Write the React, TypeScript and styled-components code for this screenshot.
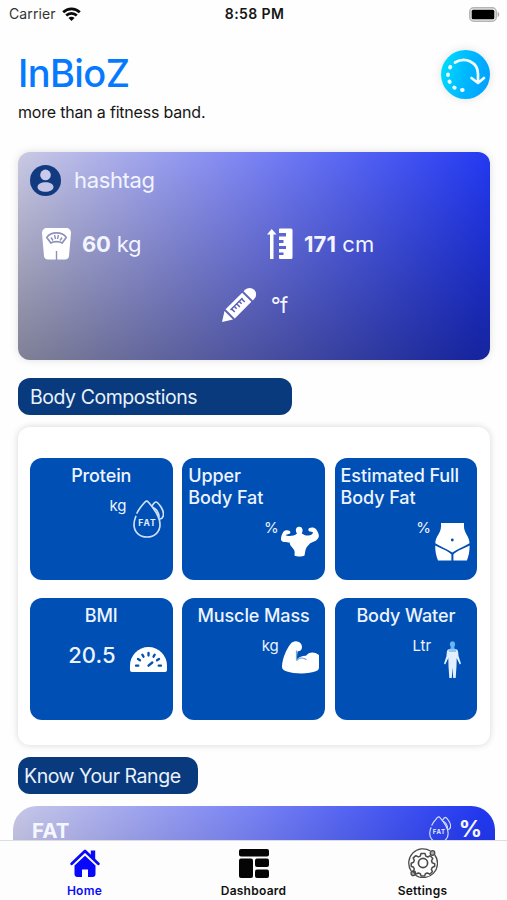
import React from 'react';
import styled, { createGlobalStyle } from 'styled-components';

const Global = createGlobalStyle`
  *, *::before, *::after { box-sizing: border-box; }
  html, body { margin: 0; padding: 0; background: #fefefe; overflow: hidden; }
  body { font-family: Inter, "Liberation Sans", sans-serif; color: #161616; }
  svg { display: block; flex: none; }
`;

const Screen = styled.div`
  width: 507px;
  height: 900px;
  display: flex;
  flex-direction: column;
  overflow: hidden;
`;

const StatusBar = styled.header`
  height: 28px;
  flex: none;
  display: grid;
  grid-template-columns: 1fr auto 1fr;
  align-items: center;
  padding: 0 7px 0 9px;
  font-size: 14px;
  line-height: 28px;
`;
const Carrier = styled.div`
  display: flex;
  align-items: center;
  gap: 6px;
  color: #333;
  letter-spacing: 0.1px;
`;
const Clock = styled.div`
  font-weight: 600;
  letter-spacing: 0.4px;
`;
const BatterySlot = styled.div`
  display: flex;
  justify-content: flex-end;
`;

const Content = styled.main`
  flex: 1;
  min-height: 0;
  overflow: hidden;
  display: flex;
  flex-direction: column;
`;
const Masthead = styled.div`
  height: 124px;
  flex: none;
  display: flex;
  justify-content: space-between;
  padding: 22px 17px 0 18px;
`;
const Brand = styled.h1`
  margin: 0;
  font-size: 38px;
  line-height: 46px;
  font-weight: 450;
  color: #067aff;
  letter-spacing: -0.6px;
`;
const Tagline = styled.p`
  margin: 6px 0 0;
  font-size: 16px;
  line-height: 20px;
  letter-spacing: -0.2px;
`;
const SyncButton = styled.button`
  width: 49px;
  height: 49px;
  margin: 0;
  padding: 0;
  border: 0;
  border-radius: 50%;
  background: linear-gradient(105deg, #00e2f8, #00b8ff 50%, #009cff);
  box-shadow: 0 0 10px rgba(0, 0, 0, 0.12);
`;

const ProfileCard = styled.section`
  height: 208px;
  flex: none;
  margin: 0 17px 18px 18px;
  border-radius: 12px;
  background:
    linear-gradient(to bottom, rgba(0, 0, 0, 0), rgba(0, 0, 0, 0.35)),
    linear-gradient(95deg, #cacae4 0%, #7c84f4 47%, #2238f2 97%);
  box-shadow: 0 0 8px rgba(0, 0, 0, 0.13);
  color: #f2f4ff;
  padding: 12px 12px 0;
`;
const UserRow = styled.div`
  display: flex;
  align-items: center;
  gap: 13px;
  height: 32px;
  font-size: 22px;
`;
const UserName = styled.span`
  letter-spacing: -0.35px;
`;
const Measures = styled.div`
  display: grid;
  grid-template-columns: 225px 1fr;
  padding-left: 12px;
  margin-top: 32px;
`;
const Measure = styled.div<{ $gap: number; $tracking?: number }>`
  display: flex;
  align-items: center;
  gap: ${(p) => p.$gap}px;
  height: 32px;
  font-size: 22px;
  letter-spacing: ${(p) => p.$tracking ?? 0}px;
  white-space: pre;
  b { font-weight: 650; }
`;
const TemperatureRow = styled.div`
  display: flex;
  justify-content: center;
  margin-top: 29px;
`;

const Pill = styled.h2<{ $width: number; $indent: number }>`
  width: ${(p) => p.$width}px;
  height: 37px;
  flex: none;
  margin: 0 0 0 18px;
  padding-left: ${(p) => p.$indent}px;
  border-radius: 12px;
  background: #083a7d;
  color: #eaf1fb;
  font-size: 19.5px;
  line-height: 38px;
  font-weight: 400;
  letter-spacing: -0.46px;
`;
const Panel = styled.section`
  height: 318px;
  flex: none;
  margin: 12px 17px 12px 18px;
  padding: 31px 12px 0;
  border-radius: 12px;
  background: #fff;
  box-shadow: 0 0 7px rgba(0, 0, 0, 0.16);
  display: grid;
  grid-template-columns: repeat(3, 142.500px);
  grid-auto-rows: 122px;
  column-gap: 9.8px;
  row-gap: 18px;
`;
const Tile = styled.article`
  border-radius: 12px;
  background: #004fb4;
  color: #edf4ff;
  padding: 7px 6px 0;
  overflow: hidden;
`;
const TileTitle = styled.h3<{ $left?: boolean }>`
  margin: 0;
  font-size: 18px;
  line-height: 21.5px;
  font-weight: 500;
  letter-spacing: -0.1px;
  text-align: ${(p) => (p.$left ? 'left' : 'center')};
  white-space: pre-line;
`;
const Reading = styled.div<{ $gap: number; $top: number; $right: number }>`
  display: flex;
  justify-content: flex-end;
  align-items: flex-start;
  gap: ${(p) => p.$gap}px;
  margin-top: ${(p) => p.$top}px;
  margin-right: ${(p) => p.$right}px;
`;
const Unit = styled.span`
  font-size: 15px;
  line-height: 18px;
`;
const Value = styled.span`
  font-size: 22px;
  line-height: 26px;
  font-weight: 550;
`;
const IconDrop = styled.div<{ $y: number }>`
  padding-top: ${(p) => p.$y}px;
`;

const RangeCard = styled.section`
  height: 60px;
  flex: none;
  margin: 12px 12px 0 13px;
  padding: 10px 13px 0 19px;
  border-radius: 24px 24px 0 0;
  background:
    linear-gradient(to bottom, rgba(0, 0, 0, 0), rgba(0, 0, 0, 0.1)),
    linear-gradient(97deg, #c8c8e8 0%, #7a84f4 48%, #2238f0 96%);
  color: #f5f6ff;
  display: flex;
  justify-content: space-between;
  align-items: flex-start;
  font-size: 20.500px;
  line-height: 29px;
  font-weight: 700;
`;
const RangeUnit = styled.div`
  display: flex;
  align-items: flex-start;
  gap: 8px;
  line-height: 27px;
  font-size: 23px;
  font-weight: 650;
`;

const TabBar = styled.nav`
  height: 60px;
  flex: none;
  border-top: 1px solid #dcdce2;
  background: #fdfdfd;
  display: grid;
  grid-template-columns: repeat(3, 1fr);
`;
const Tab = styled.a<{ $active?: boolean }>`
  display: flex;
  flex-direction: column;
  align-items: center;
  padding-top: 7px;
  gap: 5px;
  color: ${(p) => (p.$active ? '#0b0bfa' : '#111')};
  font-size: 12px;
  line-height: 16px;
  font-weight: 600;
  letter-spacing: 0.25px;
`;

const WifiIcon = () => (
  <svg width="19" height="15" viewBox="0 0 19 15" fill="none" stroke="#0a0a0a" strokeWidth="2.7">
    <path d="M1.2 5.2a11.8 11.8 0 0 1 16.6 0" />
    <path d="M4.2 8.5a7.500 7.500 0 0 1 10.600 0" />
    <path d="M6.500 11a4 4 0 0 1 6 0L9.500 14z" fill="#0a0a0a" stroke="none" />
  </svg>
);
const BatteryIcon = () => (
  <svg width="31" height="15" viewBox="0 0 31 15">
    <rect x="0.75" y="0.75" width="26.5" height="13.5" rx="4" fill="#eee" stroke="#b5b5b5" strokeWidth="1.5" />
    <rect x="2.7" y="2.8" width="22.6" height="9.4" rx="1.500" fill="#000" />
    <path d="M28.6 4.8v5.4c2.2-.7 2.2-4.7 0-5.4z" fill="#aaa" />
  </svg>
);
const SyncIcon = () => (
  <svg width="49" height="49" viewBox="0 0 49 49" fill="none" stroke="#f2fdff" strokeWidth="2.7" strokeLinecap="round" strokeLinejoin="round">
    <path d="M14 12.500C24 6.500 37 12 37 24v8M30.500 28l6.500 5 6-5" />
    <path d="M9 17.500l.4-.7M7 25v-.5M8.700 32l-.3-.6M13.700 37.800l-.5-.4M21 40h.7" strokeWidth="3.800" />
  </svg>
);
const UserIcon = () => (
  <svg width="31" height="31" viewBox="0 0 31 31">
    <circle cx="15.5" cy="15.5" r="15.5" fill="#123a80" />
    <circle cx="15.5" cy="9.900" r="5.300" fill="#c9caec" />
    <path d="M7.500 22c0-3 3.600-4.800 8-4.800s8 1.800 8 4.800-3.600 4.800-8 4.800-8-1.800-8-4.800z" fill="#c3c4e6" />
  </svg>
);
const ScaleIcon = () => (
  <svg width="29" height="32" viewBox="0 0 29 32">
    <path d="M5 0h19c3 0 5 2 5 5l-2 23c-.2 2-1.700 3.500-4 3.500H6c-2.300 0-3.800-1.500-4-3.500L0 5c0-3 2-5 5-5z" fill="#fff" />
    <path d="M4.800 9.500C8.800 3.400 20.200 3.400 24.200 9.500L20.200 15c-2.600-1.800-8.800-1.800-11.400 0z" fill="#fff" stroke="#8f90b9" strokeWidth="1.700" strokeLinejoin="round" />
    <path d="M9 9.500l2 3M12.500 7l1 4M16.500 7l-1 4M20 9.500l-2 3M14.500 23v9" stroke="#8f90b9" strokeWidth="1.400" />
  </svg>
);
const HeightIcon = () => (
  <svg width="26" height="32" viewBox="0 0 26 32" fill="#fff">
    <path d="M4.700 1L0 6.500h3V31h3.500V6.500H9.500z" />
    <path d="M13 .5h11q1.500 0 1.500 1.500v27.500q0 1.500-1.500 1.500H13q-1 0-1-1v-3h4.500v-2.500H12V21h7v-3h-7v-3h4.500v-3H12V8.500h7V5h-7V1.500q0-1 1-1z" />
  </svg>
);
const ThermometerIcon = () => (
  <svg width="36" height="36" viewBox="0 0 36 36">
    <g transform="rotate(-45 18 18)">
      <path d="M-6 18L3.500 12v12z" fill="#fff" />
      <path d="M5.500 11.500h23.500v13H5.500z" fill="#fff" />
      <path d="M31 11.500h2a6.500 6.500 0 0 1 0 13H31z" fill="#fff" />
      <path d="M8.500 15.500h17M10 15.500v4.500M13.700 15.500v3.500M17.200 15.500v4.500M20.700 15.500v3.500M24.200 15.500v4.500" fill="none" stroke="#5961b8" strokeWidth="1.500" />
    </g>
  </svg>
);
const FatTag = styled.text`
  font-family: Inter, sans-serif;
  font-size: 8.5px;
  font-weight: 700;
  letter-spacing: 1px;
`;
const FatIcon = ({ w, h }: { w: number; h: number }) => (
  <svg width={w} height={h} viewBox="0 0 31 38" fill="none" stroke="#cfe0fb" strokeWidth="1.7" strokeLinecap="round">
    <path d="M4 13C6 8.500 9.500 5 12 2c1.500-1.500 2.500-1 3.500.3C20.500 8 27 16.500 27 24.500c0 7.500-5.500 12.500-13 12.500S1 32 1 24.500c0-3 .7-5.500 1.800-8" />
    <path d="M19 6c1.500-2.500 2.700-4 4-4 2 0 7.500 7.500 7.500 12 0 2.500-1.200 4.500-3.500 5M20 7.500c3 1 6 5 6 9.500" />
    <FatTag x="14.500" y="26" textAnchor="middle" fill="#e4eeff" stroke="none">FAT</FatTag>
  </svg>
);
const TorsoIcon = () => (
  <svg width="38" height="31" viewBox="0 0 38 31" fill="#fff">
    <path d="M16 7.500c-2-2.500-1.500-6.500 1.800-6.800 3.700-.3 4.700 3.300 3 6.800 2 1.400 4 2.300 7 2 3.500-.3 4.300-2 4-3.500l-3-.5c-1.800-.5-2-2.600-.4-3.500 2.400-1.200 5.500-.4 6.500 1 1.600 2.300 3.600 5.500 2.800 8-1.200 3.800-5 4.500-8.600 6.300-1.500 1.800-4 4-4.600 6.700l-1 5.500c-2.500 1.400-7.500 1.400-10 0 .2-3 .4-4.500-.8-6-1.500-2.700-4-3.700-4-7-3.500-.2-7.200.3-8.500-2.200-.8-3 1-6.600 2.400-8.800 1.300-1.500 4.500-1.800 6.200-.6 1.200 1.300.5 3-1 3.200L4.500 9c1.700 1.500 8.200 1.600 11.500-1.500z" />
  </svg>
);
const WaistIcon = () => (
  <svg width="35" height="38" viewBox="0 0 35 38" fill="#fff">
    <path d="M6 0h23c-.3 4.500.3 7.500 2.300 11 2 3.500 3.200 6 3.200 9.200-5 3-12 5.600-17.200 9.300C12 25.800 5 23.200.3 20.200c0-3.200 1.400-6 3.400-9.200C5.700 7.500 6.300 4.500 6 0z" />
    <path d="M.2 22.500c5 2.700 12.300 4.700 16.200 9V37.500H3C1.200 33 .1 28 .2 22.500zM34.600 22.500c-5 2.700-12.300 4.700-16.200 9v6h13.500c1.800-4.500 2.800-9.500 2.700-15z" />
    <circle cx="17.3" cy="17" r="1.400" fill="#004fb4" />
  </svg>
);
const GaugeIcon = () => (
  <svg width="37" height="25" viewBox="0 0 37 25">
    <path d="M0 23V18.500a18.500 18.500 0 0 1 37 0V23q0 2-2 2H2q-2 0-2-2z" fill="#fff" />
    <path d="M6 18.700h2.300M28.700 18.700H31M8 12l2 1.300M29 12l-2 1.300M12.300 7.700l1.200 2M24.700 7.700l-1.200 2M18.500 5.800v2.700M18.500 18.700L22.300 15.500" stroke="#0750ae" strokeWidth="2.300" strokeLinecap="round" />
  </svg>
);
const ArmIcon = () => (
  <svg width="38" height="33" viewBox="0 0 38 33">
    <path d="M8.500 3C10 .8 13 0 15 .5c3 .5 4.800 2.300 5 5.500 0 2.700-1.500 4.300-4.500 4.500l-.8 8c3-3 6-4 9.300-3.800 2.500-3.500 8-4.700 13-.7V26c0 2-.6 3-2.500 4C27 33.300 12 33 5 30.500 1 29 0 28 0 25 .5 17 4.500 8 8.500 3z" fill="#fff" />
    <path d="M14.500 19.500c2.500-2.500 6.500-3.500 10-.8M14.500 9.500v10" stroke="#77a3df" strokeWidth="1.200" fill="none" />
  </svg>
);
const BodyIcon = () => (
  <svg width="17" height="38" viewBox="0 0 17 38">
    <path d="M4 9C6 8 6.800 7.500 6.800 6 5 3.500 6 .3 8.500.3S12 3.500 10.200 6c0 1.500.8 2 2.800 3z" fill="#69b5f4" />
    <path d="M4 8.500h9c1.300 1 1.300 4 1.500 6.500L17 22.500l-1.300 1L12.700 17l-.2 8-.8 12H9.200L8.500 26.500 7.800 37H5.300l-.8-12-.2-8-3 6.500-1.300-1L2.500 15c.2-2.500.2-5.500 1.500-6.500z" fill="#e2efff" />
    <path d="M4.500 8.300h8l-.5 2.700H5z" fill="#8cc6f8" />
  </svg>
);
const HomeIcon = () => (
  <svg width="30" height="30" viewBox="0 0 30 30">
    <path d="M1.700 15.700L15 3l13.300 12.700" fill="none" stroke="#0808fa" strokeWidth="2.800" strokeLinecap="round" strokeLinejoin="round" />
    <path d="M20.800 2.500h4.400v9.300l-4.400-4z" fill="#0808fa" />
    <path d="M4.500 17.500L15 7.800 25.500 17.500v8.500q0 3-3 3H18v-7.500h-6V29H7.500q-3 0-3-3z" fill="#0808fa" />
  </svg>
);
const DashboardIcon = () => (
  <svg width="30" height="30" viewBox="0 0 30 30" fill="#050505">
    <rect x="0" y="1" width="30" height="7.500" rx="2" />
    <rect x="0" y="10.5" width="14" height="19.500" rx="2" />
    <rect x="16" y="10.5" width="14" height="8.500" rx="2" />
    <rect x="16" y="21.5" width="14" height="8.500" rx="2" />
  </svg>
);
const SettingsIcon = () => (
  <svg width="30" height="30" viewBox="0 0 30 30" fill="none" stroke="#4b4b4b" strokeWidth="1.3" strokeLinejoin="round">
    <path d="M22.500 3A14.200 14.200 0 0 0 3.200 23M7.500 27.200A14.200 14.200 0 0 0 26.800 7" />
    <circle cx="24.5" cy="5" r="2.300" fill="#aaa" />
    <circle cx="5.3" cy="25.3" r="2.300" fill="#aaa" />
    <circle cx="15" cy="15" r="4.600" strokeWidth="1.700" />
    <path d="M13 5.500h4l.8 2.600 2 .9 2.500-1.300 2.500 2.700-1.300 2.500.8 2 2.400.9v2.500l-2.500 1.200-.8 1.900 1 2.400-2.700 2.400-2.400-1.200-1.900.8-.9 2.300h-3.300l-.9-2.300-2-.8-2.400 1.200-2.700-2.400 1.100-2.500-.8-2-2.300-1v-3l2.300-1 .8-2-1.100-2.400L7.900 7.700l2.400 1.200 2-.8z" strokeWidth="1.500" />
  </svg>
);

interface TileData {
  title: string;
  left?: boolean;
  unit?: string;
  value?: string;
  icon: React.ReactNode;
  top: number;
  drop: number;
  gap: number;
  right: number;
}
const tiles: TileData[] = [
  { title: 'Protein', unit: 'kg', icon: <FatIcon w={31} h={38} />, top: 10, drop: 3, gap: 6, right: 3 },
  { title: 'Upper\nBody Fat', left: true, unit: '%', icon: <TorsoIcon />, top: 10.5, drop: 7, gap: 2, right: 0 },
  { title: 'Estimated Full\nBody Fat', left: true, unit: '%', icon: <WaistIcon />, top: 10.5, drop: 4, gap: 4, right: 1 },
  { title: 'BMI', value: '20.5', icon: <GaugeIcon />, top: 15, drop: 5, gap: 14, right: 0 },
  { title: 'Muscle Mass', unit: 'kg', icon: <ArmIcon />, top: 10, drop: 4, gap: 3, right: -1 },
  { title: 'Body Water', unit: 'Ltr', icon: <BodyIcon />, top: 10, drop: 4, gap: 13, right: 10 },
];

export default function App() {
  return (
    <>
      <Global />
      <Screen>
        <StatusBar>
          <Carrier>Carrier <WifiIcon /></Carrier>
          <Clock>8:58 PM</Clock>
          <BatterySlot><BatteryIcon /></BatterySlot>
        </StatusBar>
        <Content>
          <Masthead>
            <div>
              <Brand>InBioZ</Brand>
              <Tagline>more than a fitness band.</Tagline>
            </div>
            <SyncButton aria-label="Sync"><SyncIcon /></SyncButton>
          </Masthead>
          <ProfileCard>
            <UserRow><UserIcon /><UserName>hashtag</UserName></UserRow>
            <Measures>
              <Measure $gap={11} $tracking={-0.2}><ScaleIcon /><span><b>60</b> kg</span></Measure>
              <Measure $gap={11} $tracking={0.1}><HeightIcon /><span><b>171</b> cm</span></Measure>
            </Measures>
            <TemperatureRow>
              <Measure $gap={14} $tracking={-0.8}><ThermometerIcon /><span>°f</span></Measure>
            </TemperatureRow>
          </ProfileCard>
          <Pill $width={274} $indent={12}>Body Compostions</Pill>
          <Panel>
            {tiles.map((t) => (
              <Tile key={t.title}>
                <TileTitle $left={t.left}>{t.title}</TileTitle>
                <Reading $gap={t.gap} $top={t.top} $right={t.right}>
                  {t.value ? <Value>{t.value}</Value> : <Unit>{t.unit}</Unit>}
                  <IconDrop $y={t.drop}>{t.icon}</IconDrop>
                </Reading>
              </Tile>
            ))}
          </Panel>
          <Pill $width={180} $indent={6}>Know Your Range</Pill>
          <RangeCard>
            <span>FAT</span>
            <RangeUnit><FatIcon w={22} h={27} />%</RangeUnit>
          </RangeCard>
        </Content>
        <TabBar>
          <Tab $active><HomeIcon />Home</Tab>
          <Tab><DashboardIcon />Dashboard</Tab>
          <Tab><SettingsIcon />Settings</Tab>
        </TabBar>
      </Screen>
    </>
  );
}
